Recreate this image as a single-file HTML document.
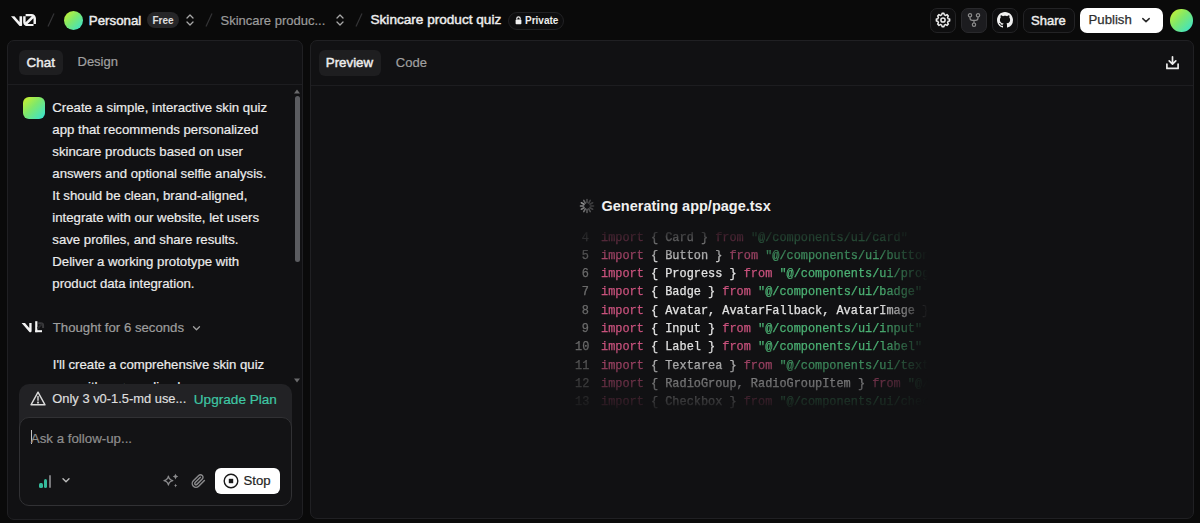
<!DOCTYPE html>
<html><head><meta charset="utf-8">
<style>
*{box-sizing:border-box;margin:0;padding:0}
html,body{width:1200px;height:523px;overflow:hidden;background:#0a0a0a;font-family:"Liberation Sans",sans-serif;color:#ededed}
.a{position:absolute}
.t{position:absolute;white-space:pre;line-height:1}
.m{-webkit-text-stroke:0.2px currentColor}
.sb{-webkit-text-stroke:0.45px currentColor}
.grad{background:linear-gradient(135deg,#d2f229 0%,#7ee86c 45%,#33e2d8 100%)}
.btn{position:absolute;border:1px solid #232325;background:#0e0e0f;border-radius:7px}
.panel{position:absolute;background:#111113;border:1px solid #202023;border-radius:7px;overflow:hidden}
.sep{position:absolute;height:1px;background:#1d1d20}
.code{font-family:"Liberation Mono",monospace;font-size:11.9px;line-height:18.33px;white-space:pre;-webkit-text-stroke:0.25px currentColor}
.kw{color:#c9527d}
.id{color:#e2e2e2}
.st{color:#4cb274}
.ln{color:#6b6b6b;display:inline-block;width:14px;text-align:right;margin-right:12px}
</style></head><body>

<!-- HEADER -->
<svg class="a" style="left:11px;top:13.5px" width="25" height="12.5" viewBox="0 0 40 20"><path fill="#f2f2f2" d="M23.3919 0H32.9188C36.7819 0 39.9136 3.13165 39.9136 6.99475V16.0805H36.0006V6.99475C36.0006 6.90167 35.9969 6.80925 35.9898 6.71766L26.4628 16.079C26.4949 16.08 26.5272 16.0805 26.5595 16.0805H36.0006V19.7762H26.5595C22.6964 19.7762 19.4788 16.6139 19.4788 12.7508V3.68923H23.3919V12.7508C23.3919 12.9253 23.4054 13.0977 23.4316 13.2668L33.1682 3.6995C33.0861 3.6927 33.003 3.68923 32.9188 3.68923H23.3919V0Z"/><path fill="#f2f2f2" d="M13.7688 19.0956L0 3.68759H5.53933L13.6231 12.7337V3.68759H17.7535V17.5746C17.7535 19.6705 15.1654 20.6584 13.7688 19.0956Z"/></svg>
<svg class="a" style="left:46px;top:12px" width="10" height="16"><line x1="8" y1="1.5" x2="2" y2="14.5" stroke="#343436" stroke-width="1.2"/></svg>
<div class="a grad" style="left:64px;top:10.5px;width:19px;height:19px;border-radius:50%"></div>
<div class="t sb" style="left:88.8px;top:13.5px;font-size:13.3px;color:#ededed">Personal</div>
<div class="a" style="left:147px;top:12px;width:32px;height:16px;border-radius:8px;background:#262628"></div>
<div class="t" style="left:152.5px;top:16px;font-size:10px;font-weight:700;color:#e0e0e0">Free</div>
<svg class="a" style="left:185px;top:13px" width="10" height="14" viewBox="0 0 10 14"><path d="M2 5 L5 2 L8 5 M2 9 L5 12 L8 9" fill="none" stroke="#a8a8a8" stroke-width="1.3" stroke-linecap="round" stroke-linejoin="round"/></svg>
<svg class="a" style="left:204px;top:12px" width="10" height="16"><line x1="8" y1="1.5" x2="2" y2="14.5" stroke="#343436" stroke-width="1.2"/></svg>
<div class="t m" style="left:220.5px;top:14px;font-size:13px;color:#9c9c9c">Skincare produc...</div>
<svg class="a" style="left:335px;top:13px" width="10" height="14" viewBox="0 0 10 14"><path d="M2 5 L5 2 L8 5 M2 9 L5 12 L8 9" fill="none" stroke="#a8a8a8" stroke-width="1.3" stroke-linecap="round" stroke-linejoin="round"/></svg>
<svg class="a" style="left:354px;top:12px" width="10" height="16"><line x1="8" y1="1.5" x2="2" y2="14.5" stroke="#343436" stroke-width="1.2"/></svg>
<div class="t sb" style="left:370.5px;top:13px;font-size:13.6px;color:#ededed">Skincare product quiz</div>
<div class="a" style="left:508px;top:11.5px;width:56px;height:18px;border-radius:9px;border:1px solid #222224;background:#0d0d0e"></div>
<svg class="a" style="left:514.5px;top:16px" width="7" height="8.5" viewBox="0 0 7 8.5"><path d="M1.8 3.6V2.5a1.7 1.7 0 0 1 3.4 0v1.1" fill="none" stroke="#f0f0f0" stroke-width="1.2"/><rect x="0.6" y="3.6" width="5.8" height="4.6" rx="0.8" fill="#f0f0f0"/></svg>
<div class="t" style="left:525px;top:15.8px;font-size:10px;font-weight:700;color:#ededed">Private</div>

<!-- right header buttons -->
<div class="btn" style="left:930px;top:7.5px;width:26px;height:25px"></div>
<svg class="a" style="left:935px;top:12px" width="16" height="16" viewBox="0 0 16 16" fill="none" stroke="#ececec" stroke-width="1.5" stroke-linejoin="round"><path d="M6.68 2.87 L7.06 1.37 L8.94 1.37 L9.32 2.87 L10.70 3.44 L12.02 2.64 L13.36 3.98 L12.56 5.30 L13.13 6.68 L14.63 7.06 L14.63 8.94 L13.13 9.32 L12.56 10.70 L13.36 12.02 L12.02 13.36 L10.70 12.56 L9.32 13.13 L8.94 14.63 L7.06 14.63 L6.68 13.13 L5.30 12.56 L3.98 13.36 L2.64 12.02 L3.44 10.70 L2.87 9.32 L1.37 8.94 L1.37 7.06 L2.87 6.68 L3.44 5.30 L2.64 3.98 L3.98 2.64 L5.30 3.44Z"/><circle cx="8" cy="8" r="2.1"/></svg>
<div class="btn" style="left:961px;top:7.5px;width:26px;height:25px;background:#1c1c1f;border-color:#29292c"></div>
<svg class="a" style="left:966px;top:12px" width="16" height="16" viewBox="0 0 24 24" fill="none" stroke="#8c8c8c" stroke-width="1.8" stroke-linecap="round" stroke-linejoin="round"><circle cx="12" cy="19" r="2.5"/><circle cx="6" cy="5" r="2.5"/><circle cx="18" cy="5" r="2.5"/><path d="M6 7.5v1.5c0 2 1.5 3.5 3.5 3.5h5c2 0 3.5-1.5 3.5-3.5V7.5"/><path d="M12 12.5v4"/></svg>
<div class="btn" style="left:992px;top:7.5px;width:26px;height:25px"></div>
<svg class="a" style="left:997px;top:12px" width="16" height="16" viewBox="0 0 16 16"><path fill="#f0f0f0" d="M8 0C3.58 0 0 3.58 0 8c0 3.54 2.29 6.53 5.47 7.59.4.07.55-.17.55-.38 0-.19-.01-.82-.01-1.49-2.01.37-2.53-.49-2.69-.94-.09-.23-.48-.94-.82-1.13-.28-.15-.68-.52-.01-.53.63-.01 1.08.58 1.23.82.72 1.21 1.87.87 2.33.66.07-.52.28-.87.51-1.07-1.78-.2-3.64-.89-3.64-3.95 0-.87.31-1.59.82-2.15-.08-.2-.36-1.02.08-2.12 0 0 .67-.21 2.2.82.64-.18 1.32-.27 2-.27.68 0 1.36.09 2 .27 1.53-1.04 2.2-.82 2.2-.82.44 1.1.16 1.92.08 2.12.51.56.82 1.27.82 2.15 0 3.07-1.87 3.75-3.65 3.95.29.25.54.73.54 1.48 0 1.07-.01 1.93-.01 2.2 0 .21.15.46.55.38A8.013 8.013 0 0016 8c0-4.42-3.58-8-8-8z"/></svg>
<div class="btn" style="left:1023px;top:7.5px;width:52px;height:25px"></div>
<div class="t sb" style="left:1031px;top:14px;font-size:13px;color:#ededed">Share</div>
<div class="a" style="left:1080px;top:7.5px;width:83px;height:25.5px;border-radius:7px;background:#ffffff"></div>
<div class="t" style="left:1088.5px;top:12.8px;font-size:13.2px;color:#2e2e2e;font-weight:400;-webkit-text-stroke:0.25px #2e2e2e">Publish</div>
<svg class="a" style="left:1140.5px;top:16.5px" width="10" height="7" viewBox="0 0 10 7"><path d="M1.8 1.6 L5 4.6 L8.2 1.6" fill="none" stroke="#2a2a2a" stroke-width="1.5" stroke-linecap="round" stroke-linejoin="round"/></svg>
<div class="a grad" style="left:1170px;top:9px;width:22.5px;height:22.5px;border-radius:50%"></div>

<!-- CHAT PANEL -->
<div class="panel" style="left:7px;top:40px;width:296px;height:480px">
</div>
<div class="sep" style="left:8px;top:84px;width:294px"></div>
<div class="a" style="left:19px;top:49.5px;width:44px;height:25.5px;border-radius:6px;background:#1e1e20"></div>
<div class="t sb" style="left:26.6px;top:55.6px;font-size:13.4px;color:#ededed">Chat</div>
<div class="t m" style="left:77.5px;top:55px;font-size:13px;color:#a0a0a0">Design</div>
<!-- message -->
<div class="a grad" style="left:22.5px;top:97px;width:22px;height:22px;border-radius:6px"></div>
<div class="a" style="left:52.3px;top:97px;width:235px;font-size:13.2px;line-height:22px;color:#ececec;white-space:pre;-webkit-text-stroke:0.2px #ececec">Create a simple, interactive skin quiz
app that recommends personalized
skincare products based on user
answers and optional selfie analysis.
It should be clean, brand-aligned,
integrate with our website, let users
save profiles, and share results.
Deliver a working prototype with
product data integration.</div>
<svg class="a" style="left:18px;top:315px" width="30" height="23" viewBox="0 0 30 23"><path d="M3.6 8H7L11.3 12.9V8H13.6V15.9C13.6 17.2 12.2 17.7 11.4 16.9Z" fill="#f4f4f4"/><rect x="17.2" y="6.2" width="2.2" height="11" fill="#f4f4f4"/><rect x="17.2" y="15.2" width="6.8" height="2" fill="#f4f4f4"/><path d="M20.2 8.2H22.8A2.3 2.3 0 0 1 25.1 10.5V13" fill="none" stroke="#3a3a3c" stroke-width="2"/><path d="M19.5 13.5L24 9" stroke="#2c2c2e" stroke-width="1.8"/></svg>
<div class="t m" style="left:52.8px;top:321px;font-size:13.2px;color:#9e9e9e">Thought for 6 seconds</div>
<svg class="a" style="left:192px;top:325px" width="9" height="7" viewBox="0 0 9 7"><path d="M1.5 1.8 L4.5 4.8 L7.5 1.8" fill="none" stroke="#a0a0a0" stroke-width="1.3" stroke-linecap="round" stroke-linejoin="round"/></svg>
<div class="t m" style="left:52.8px;top:357.5px;font-size:13.2px;color:#ececec">I'll create a comprehensive skin quiz</div>
<div class="t m" style="left:52.8px;top:380px;font-size:13.2px;color:#ececec">app with personalized</div>
<!-- scrollbar -->
<svg class="a" style="left:294px;top:88.5px" width="6" height="5" viewBox="0 0 6 5"><path d="M0 4.5 L3 0.5 L6 4.5Z" fill="#6a6a6c"/></svg>
<div class="a" style="left:294.5px;top:96px;width:5.5px;height:166px;border-radius:3px;background:#5b5c60"></div>
<svg class="a" style="left:294px;top:378px" width="6" height="5" viewBox="0 0 6 5"><path d="M0 0.5 L3 4.5 L6 0.5Z" fill="#6a6a6c"/></svg>
<!-- banner -->
<div class="a" style="left:19px;top:383.5px;width:272.5px;height:60px;border-radius:10px;background:#222225"></div>
<svg class="a" style="left:30px;top:391px" width="16" height="15" viewBox="0 0 16 15" fill="none" stroke="#dcdcdc" stroke-width="1.4" stroke-linejoin="round" stroke-linecap="round"><path d="M8 1.2 L15 13.8 H1 Z"/><path d="M8 5.5v3.8"/><circle cx="8" cy="11.6" r="0.4" fill="#dcdcdc"/></svg>
<div class="t m" style="left:52.3px;top:393px;font-size:12.9px;color:#dedede">Only 3 v0-1.5-md use...</div>
<div class="t m" style="left:193.8px;top:393px;font-size:13.6px;color:#3fc6a4">Upgrade Plan</div>
<!-- input -->
<div class="a" style="left:19px;top:416.5px;width:272.5px;height:89px;border-radius:10px;background:#131315;border:1px solid #313134"></div>
<div class="a" style="left:30.5px;top:430px;width:1.2px;height:13.5px;background:#c4c4c4"></div>
<div class="t m" style="left:30.8px;top:431.5px;font-size:13.3px;color:#8e8e8e">Ask a follow-up...</div>
<div class="a" style="left:38.5px;top:482.5px;width:4px;height:5px;border-radius:1.5px;background:#35bb9c"></div>
<div class="a" style="left:43.5px;top:478.5px;width:3.5px;height:9px;border-radius:1.5px;background:#35bb9c"></div>
<div class="a" style="left:48.5px;top:475px;width:2.5px;height:12.5px;border-radius:1px;background:#77777a"></div>
<svg class="a" style="left:61px;top:477px" width="10" height="7" viewBox="0 0 10 7"><path d="M2 1.8 L5 4.8 L8 1.8" fill="none" stroke="#bcbcbc" stroke-width="1.4" stroke-linecap="round" stroke-linejoin="round"/></svg>
<svg class="a" style="left:163px;top:473px" width="16" height="15" viewBox="0 0 16 15" fill="#8a8a8c"><path d="M5.4 3.2 Q6 6.9 9.8 7.6 Q6 8.3 5.4 12 Q4.8 8.3 1 7.6 Q4.8 6.9 5.4 3.2Z" fill="none" stroke="#8a8a8c" stroke-width="1.3" stroke-linejoin="round"/><path d="M12.5 0.8 Q12.9 3.1 15.2 3.6 Q12.9 4.1 12.5 6.4 Q12.1 4.1 9.8 3.6 Q12.1 3.1 12.5 0.8Z"/><path d="M12.6 10.8 Q12.9 12.3 14.2 12.6 Q12.9 12.9 12.6 14.4 Q12.3 12.9 11 12.6 Q12.3 12.3 12.6 10.8Z"/></svg>
<svg class="a" style="left:191px;top:473px" width="15" height="16" viewBox="0 0 24 24" fill="none" stroke="#8a8a8c" stroke-width="2.3" stroke-linecap="round" stroke-linejoin="round"><path d="m21.44 11.05-9.19 9.19a6 6 0 0 1-8.49-8.49l8.57-8.57A4 4 0 1 1 18 8.84l-8.59 8.57a2 2 0 0 1-2.83-2.83l8.49-8.48"/></svg>
<div class="a" style="left:215px;top:468px;width:64.5px;height:25.5px;border-radius:6px;background:#ffffff"></div>
<svg class="a" style="left:222.5px;top:473px" width="16" height="16" viewBox="0 0 16 16"><circle cx="8" cy="8" r="6.8" fill="none" stroke="#1a1a1a" stroke-width="1.4"/><rect x="5.8" y="5.8" width="4.4" height="4.4" fill="#1a1a1a"/></svg>
<div class="t" style="left:243.5px;top:473.8px;font-size:13.2px;color:#1e1e1e;-webkit-text-stroke:0.2px #1e1e1e">Stop</div>

<!-- PREVIEW PANEL -->
<div class="panel" style="left:310px;top:40px;width:884px;height:479px"></div>
<div class="sep" style="left:311px;top:85px;width:882px"></div>
<div class="a" style="left:319px;top:50px;width:62px;height:25.5px;border-radius:6px;background:#1e1e20"></div>
<div class="t sb" style="left:325.8px;top:56px;font-size:13.3px;color:#ededed">Preview</div>
<div class="t m" style="left:395.8px;top:55.5px;font-size:13px;color:#a0a0a0">Code</div>
<svg class="a" style="left:1165px;top:55px" width="15" height="15" viewBox="0 0 15 15" fill="none" stroke="#ececec" stroke-width="1.7" stroke-linecap="round" stroke-linejoin="round"><path d="M7.5 1.8v7.2M4.2 5.8l3.3 3.3 3.3-3.3M1.9 9v4.4h11.2V9"/></svg>
<!-- generating -->
<svg class="a" style="left:579px;top:197.7px" width="16" height="16" viewBox="0 0 16 16" stroke-linecap="round" stroke-width="1.6"><g stroke="#8e8e8e"><line x1="8" y1="4.6" x2="8" y2="1.5" transform="rotate(0 8 8)" opacity="0.45"/><line x1="8" y1="4.6" x2="8" y2="1.5" transform="rotate(30 8 8)" opacity="0.4"/><line x1="8" y1="4.6" x2="8" y2="1.5" transform="rotate(60 8 8)" opacity="0.35"/><line x1="8" y1="4.6" x2="8" y2="1.5" transform="rotate(90 8 8)" opacity="0.35"/><line x1="8" y1="4.6" x2="8" y2="1.5" transform="rotate(120 8 8)" opacity="0.4"/><line x1="8" y1="4.6" x2="8" y2="1.5" transform="rotate(150 8 8)" opacity="0.5"/><line x1="8" y1="4.6" x2="8" y2="1.5" transform="rotate(180 8 8)" opacity="0.6"/><line x1="8" y1="4.6" x2="8" y2="1.5" transform="rotate(210 8 8)" opacity="0.75"/><line x1="8" y1="4.6" x2="8" y2="1.5" transform="rotate(240 8 8)" opacity="0.85"/><line x1="8" y1="4.6" x2="8" y2="1.5" transform="rotate(270 8 8)" opacity="0.95"/><line x1="8" y1="4.6" x2="8" y2="1.5" transform="rotate(300 8 8)" opacity="1"/><line x1="8" y1="4.6" x2="8" y2="1.5" transform="rotate(330 8 8)" opacity="0.7"/></g></svg>
<div class="t" style="left:601.5px;top:198.5px;font-size:14.5px;font-weight:700;color:#f0f0f0">Generating app/page.tsx</div>
<div class="a code" style="left:575px;top:219.5px;width:360px;height:194px;padding-top:9px;overflow:hidden;-webkit-mask-image:linear-gradient(to right,#000 0px,#000 304px,transparent 353px),linear-gradient(to bottom,transparent 6px,#000 46px,#000 125px,transparent 194px);-webkit-mask-composite:source-in;mask-composite:intersect"><span class="ln">4</span><span class="kw">import</span><span class="id"> { Card } </span><span class="kw">from</span> <span class="st">"@/components/ui/card"</span>
<span class="ln">5</span><span class="kw">import</span><span class="id"> { Button } </span><span class="kw">from</span> <span class="st">"@/components/ui/button"</span>
<span class="ln">6</span><span class="kw">import</span><span class="id"> { Progress } </span><span class="kw">from</span> <span class="st">"@/components/ui/progress"</span>
<span class="ln">7</span><span class="kw">import</span><span class="id"> { Badge } </span><span class="kw">from</span> <span class="st">"@/components/ui/badge"</span>
<span class="ln">8</span><span class="kw">import</span><span class="id"> { Avatar, AvatarFallback, AvatarImage } </span><span class="kw">from</span> <span class="st">"@/components/ui/avatar"</span>
<span class="ln">9</span><span class="kw">import</span><span class="id"> { Input } </span><span class="kw">from</span> <span class="st">"@/components/ui/input"</span>
<span class="ln">10</span><span class="kw">import</span><span class="id"> { Label } </span><span class="kw">from</span> <span class="st">"@/components/ui/label"</span>
<span class="ln">11</span><span class="kw">import</span><span class="id"> { Textarea } </span><span class="kw">from</span> <span class="st">"@/components/ui/textarea"</span>
<span class="ln">12</span><span class="kw">import</span><span class="id"> { RadioGroup, RadioGroupItem } </span><span class="kw">from</span> <span class="st">"@/components/ui/radio-group"</span>
<span class="ln">13</span><span class="kw">import</span><span class="id"> { Checkbox } </span><span class="kw">from</span> <span class="st">"@/components/ui/checkbox"</span>
</div>

</body></html>
